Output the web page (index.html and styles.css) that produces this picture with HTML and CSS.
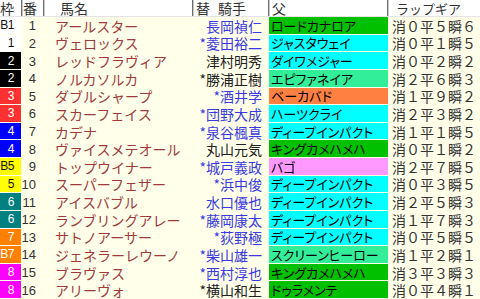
FILE: index.html
```html
<!DOCTYPE html>
<html lang="ja">
<head>
<meta charset="utf-8">
<link rel="stylesheet" href="styles.css">
</head>
<body>
<div class="table">
  <div class="row head">
    <div class="h h-waku">枠</div>
    <div class="h h-ban">番</div>
    <div class="h h-name">馬名</div>
    <div class="h h-jockey"><span>替</span><span>騎手</span></div>
    <div class="h h-sire">父</div>
    <div class="h h-lap">ラップギア</div>
  </div>

  <div class="row"><div class="waku w1">B1</div><div class="num">1</div><div class="name">アールスター</div><div class="jockey blue">長岡禎仁</div><div class="sire s-green">ロードカナロア</div><div class="lap">消０平５瞬６</div></div>
  <div class="row"><div class="waku w1">1</div><div class="num">2</div><div class="name">ヴェロックス</div><div class="jockey blue">*菱田裕二</div><div class="sire s-cyan">ジャスタウェイ</div><div class="lap">消０平１瞬５</div></div>
  <div class="row"><div class="waku w2">2</div><div class="num">3</div><div class="name">レッドフラヴィア</div><div class="jockey">津村明秀</div><div class="sire s-cyan">ダイワメジャー</div><div class="lap">消０平２瞬２</div></div>
  <div class="row"><div class="waku w2">2</div><div class="num">4</div><div class="name">ノルカソルカ</div><div class="jockey">*勝浦正樹</div><div class="sire s-aqua">エピファネイア</div><div class="lap">消２平６瞬３</div></div>
  <div class="row"><div class="waku w3">3</div><div class="num">5</div><div class="name">ダブルシャープ</div><div class="jockey blue">*酒井学</div><div class="sire s-orange">ベーカバド</div><div class="lap">消１平９瞬２</div></div>
  <div class="row"><div class="waku w3">3</div><div class="num">6</div><div class="name">スカーフェイス</div><div class="jockey blue">*団野大成</div><div class="sire s-cyan">ハーツクライ</div><div class="lap">消２平３瞬２</div></div>
  <div class="row"><div class="waku w4">4</div><div class="num">7</div><div class="name">カデナ</div><div class="jockey blue">*泉谷楓真</div><div class="sire s-cyan">ディープインパクト</div><div class="lap">消１平１瞬５</div></div>
  <div class="row"><div class="waku w4">4</div><div class="num">8</div><div class="name">ヴァイスメテオール</div><div class="jockey">丸山元気</div><div class="sire s-green">キングカメハメハ</div><div class="lap">消０平１瞬２</div></div>
  <div class="row"><div class="waku w5">B5</div><div class="num">9</div><div class="name">トップウイナー</div><div class="jockey blue">*城戸義政</div><div class="sire s-pink">バゴ</div><div class="lap">消２平７瞬５</div></div>
  <div class="row"><div class="waku w5">5</div><div class="num">10</div><div class="name">スーパーフェザー</div><div class="jockey blue">*浜中俊</div><div class="sire s-cyan">ディープインパクト</div><div class="lap">消０平３瞬５</div></div>
  <div class="row"><div class="waku w6">6</div><div class="num">11</div><div class="name">アイスバブル</div><div class="jockey blue">水口優也</div><div class="sire s-cyan">ディープインパクト</div><div class="lap">消２平５瞬３</div></div>
  <div class="row"><div class="waku w6">6</div><div class="num">12</div><div class="name">ランブリングアレー</div><div class="jockey blue">*藤岡康太</div><div class="sire s-cyan">ディープインパクト</div><div class="lap">消１平７瞬３</div></div>
  <div class="row"><div class="waku w7">7</div><div class="num">13</div><div class="name">サトノアーサー</div><div class="jockey blue">*荻野極</div><div class="sire s-cyan">ディープインパクト</div><div class="lap">消０平５瞬５</div></div>
  <div class="row"><div class="waku w7">B7</div><div class="num">14</div><div class="name">ジェネラーレウーノ</div><div class="jockey blue">*柴山雄一</div><div class="sire s-aqua">スクリーンヒーロー</div><div class="lap">消１平２瞬１</div></div>
  <div class="row"><div class="waku w8">8</div><div class="num">15</div><div class="name">ブラヴァス</div><div class="jockey blue">*西村淳也</div><div class="sire s-green">キングカメハメハ</div><div class="lap">消３平３瞬３</div></div>
  <div class="row"><div class="waku w8">8</div><div class="num">16</div><div class="name">アリーヴォ</div><div class="jockey">*横山和生</div><div class="sire s-green">ドゥラメンテ</div><div class="lap">消０平４瞬１</div></div>
</div>
</body>
</html>
```

FILE: styles.css
```css
html, body {
  margin: 0;
  padding: 0;
  background: #fffff0;
}

.table {
  width: 480px;
  height: 299px;
  display: flex;
  flex-direction: column;
  font-family: "Noto Sans CJK JP", "Noto Sans", sans-serif;
  font-size: 14px;
  background: #ffffea;
  overflow: hidden;
}

.row {
  display: grid;
  grid-template-columns: 22px 22px 149px 76px 119px 92px;
  flex: 1 1 0;
  min-height: 0;
  line-height: 1;
  white-space: nowrap;
}

.row > div {
  display: flex;
  align-items: center;
  overflow: hidden;
}

/* header */
.head {
  flex: 0 0 17px;
  background: #ffffff;
  border-bottom: 1px solid #e4e4e4;
  box-sizing: border-box;
}

.h {
  color: #333;
  font-size: 14px;
  border-right: 1px solid #6e6e6e;
  box-shadow: 1px 0 0 #c8c8c8;
  box-sizing: border-box;
}

.h-waku { padding-left: 0; }
.h-ban { padding-left: 1px; }
.h-name { padding-left: 16px; }
.h-jockey { padding-left: 3px; gap: 8px; }
.h-sire { padding-left: 3px; }
.h-lap { padding-left: 8px; border-right: none; box-shadow: none; font-size: 13px; }

/* frame number */
.waku {
  justify-content: flex-end;
  padding-right: 7px;
  margin: 0 1px 1px 0;
  font-family: "Liberation Sans", Arial, sans-serif;
  font-size: 12px;
  letter-spacing: -0.5px;
  color: #fff;
  box-sizing: border-box;
}
.w1 { background: #ffffff; color: #111; }
.w2 { background: #000000; }
.w3 { background: #ff3030; }
.w4 { background: #0000ff; }
.w5 { background: #ffff00; color: #111; }
.w6 { background: #008080; }
.w7 { background: #ff8000; }
.w8 { background: #ff00ff; }

.num {
  justify-content: flex-end;
  padding-right: 8px;
  font-family: "Liberation Sans", Arial, sans-serif;
  font-size: 13px;
  color: #333;
}

.name {
  padding-left: 11px;
  color: #a03a3a;
}

.jockey {
  justify-content: flex-end;
  padding-right: 7px;
  color: #222;
}
.jockey.blue { color: #3a3ae0; }

.sire {
  padding-left: 2px;
  margin-bottom: 1px;
  font-size: 13px;
  font-feature-settings: "palt";
  color: #000;
}
.s-green { background: #00c000; }
.s-cyan { background: #00ffff; }
.s-aqua { background: #33ee99; }
.s-orange { background: #ff8040; }
.s-pink { background: #ff99ff; }

.lap {
  padding-left: 4px;
  color: #333;
}
```
